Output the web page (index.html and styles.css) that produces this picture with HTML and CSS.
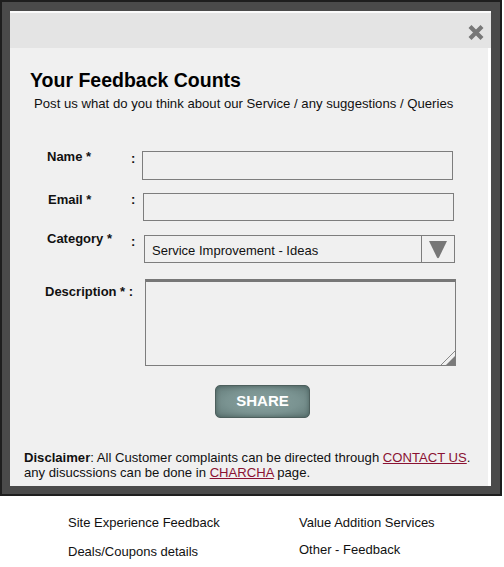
FILE: index.html
```html
<!DOCTYPE html>
<html lang="en">
<head>
<meta charset="utf-8">
<title>Your Feedback Counts</title>
<link rel="stylesheet" href="styles.css">
</head>
<body>
<div class="frame">
  <div class="card">
    <div class="card-head">
      <button class="close" type="button" aria-label="Close">
        <svg width="18" height="17" viewBox="0 0 18 17"><path d="M3 2.5 L15 14.5 M15 2.5 L3 14.5" stroke="#777" stroke-width="4.2" stroke-linecap="butt" fill="none"/></svg>
      </button>
    </div>
    <div class="card-body">
      <h1 class="title">Your Feedback Counts</h1>
      <p class="sub">Post us what do you think about our Service / any suggestions / Queries</p>
      <form class="form">
        <div class="row row-name">
          <label class="lbl">Name *</label>
          <span class="colon">:</span>
          <input class="field" type="text">
        </div>
        <div class="row row-email">
          <label class="lbl">Email *</label>
          <span class="colon">:</span>
          <input class="field" type="text">
        </div>
        <div class="row row-cat">
          <label class="lbl">Category *</label>
          <span class="colon">:</span>
          <div class="select">
            <span class="select-text">Service Improvement - Ideas</span>
            <span class="select-btn">
              <svg width="20" height="19" viewBox="0 0 20 19"><path d="M1 1 H19 L11 17.5 Q10 19 9 17.5 Z" fill="#777"/></svg>
            </span>
          </div>
        </div>
        <div class="row row-desc">
          <label class="lbl">Description * :</label>
          <div class="textarea">
            <svg class="grip" width="15" height="15" viewBox="0 0 15 15"><path d="M15 6 V15 H6 Z" fill="#7a7a7a"/><path d="M1 15 L15 1" stroke="#888" stroke-width="1"/></svg>
          </div>
        </div>
      </form>
      <div class="actions">
        <button class="share" type="button">SHARE</button>
      </div>
      <p class="disclaimer"><b>Disclaimer</b>: All Customer complaints can be directed through <a href="#">CONTACT US</a>.<br>any disucssions can be done in <a href="#">CHARCHA</a> page.</p>
    </div>
  </div>
</div>
<div class="cats">
  <ul class="cat-col">
    <li>Site Experience Feedback</li>
    <li>Deals/Coupons details</li>
  </ul>
  <ul class="cat-col cat-col-2">
    <li>Value Addition Services</li>
    <li>Other - Feedback</li>
  </ul>
</div>
</body>
</html>
```
FILE: styles.css
```css
* { box-sizing: border-box; }
html, body { margin: 0; padding: 0; background: #fff; }
body { font-family: "Liberation Sans", Arial, sans-serif; color: #111; }

.frame {
  width: 502px;
  height: 496px;
  background: #4a4a4a;
  border: 2px solid #1e1e1e;
  padding: 9px 9px 8px 8px;
}
.card {
  height: 100%;
  background: #fff;
  display: flex;
  flex-direction: column;
}
.card-head {
  height: 37px;
  background: #e4e4e4;
  border-top: 2px solid #fbfbfb;
  display: flex;
  justify-content: flex-end;
  padding: 11px 6px 0 0;
}
.close {
  border: 0;
  background: none;
  padding: 0;
  width: 18px;
  height: 17px;
  display: block;
  cursor: pointer;
}
.close svg { display: block; }

.card-body {
  flex: 1;
  background: #f0f0f0;
  margin: 0 3px 0 0;
  padding: 21px 0 0 14px;
  display: flex;
  flex-direction: column;
}
.title {
  margin: 0 0 0 6px;
  font-size: 19.5px;
  line-height: 22px;
  font-weight: bold;
  color: #000;
}
.sub {
  margin: 5px 0 0 10px;
  font-size: 13.15px;
  line-height: 15px;
  color: #111;
}

.form {
  margin: 40px 0 0 23px;
  display: flex;
  flex-direction: column;
}
.row {
  display: flex;
  align-items: flex-start;
}
.row-email { margin-top: 13px; }
.row-cat { margin-top: 14px; }
.row-desc { margin-top: 16px; }

.lbl {
  width: 84px;
  flex-shrink: 0;
  white-space: nowrap;
  font-size: 13px;
  line-height: 15px;
  font-weight: bold;
  color: #111;
}
.colon {
  width: 11px;
  flex-shrink: 0;
  font-size: 13px;
  line-height: 15px;
  font-weight: bold;
  color: #111;
}
.row-name .lbl { margin-top: -2px; }
.row-email .lbl { margin: -1px 0 0 1px; width: 83px; }
.row-email .colon { margin-top: -1px; }
.row-cat .lbl { margin-top: -4px; }
.row-cat .colon { margin-top: -1px; }
.row-desc .lbl { margin: 5px 0 0 -2px; width: 100px; }

.field {
  width: 311px;
  height: 29px;
  border: 1px solid #7d7d7d;
  background: #f0f0f0;
  margin: 0;
  padding: 0 6px;
  font: inherit;
}
.row-email .field { height: 28px; margin-left: 1px; }

.select {
  width: 311px;
  height: 28px;
  margin-left: 2px;
  border: 1px solid #7d7d7d;
  display: flex;
  align-items: stretch;
}
.select-text {
  flex: 1;
  padding: 7px 0 0 7px;
  font-size: 13px;
  line-height: 15px;
  color: #111;
}
.select-btn {
  width: 33px;
  border-left: 1px solid #7d7d7d;
  display: flex;
  justify-content: center;
  padding-top: 4px;
}
.select-btn svg { display: block; }

.textarea {
  position: relative;
  width: 311px;
  height: 87px;
  border: 1px solid #7d7d7d;
  border-top: 3px solid #777;
  background: #f0f0f0;
}
.grip {
  position: absolute;
  right: 0;
  bottom: 0;
  display: block;
}

.actions {
  display: flex;
  padding: 19px 0 0 191px;
}
.share {
  width: 95px;
  height: 33px;
  border: 1px solid #4d5f5d;
  border-radius: 5px;
  background: radial-gradient(ellipse at center, #87a09e 0%, #7a9391 55%, #627a78 100%);
  box-shadow: inset 0 0 4px rgba(40, 60, 58, 0.5);
  color: #fff;
  font-family: "Liberation Sans", Arial, sans-serif;
  font-size: 15px;
  font-weight: bold;
  padding: 0 0 2px;
  cursor: pointer;
}

.disclaimer {
  margin: auto 0 0 0;
  padding: 0 0 6px;
  font-size: 13.1px;
  line-height: 15px;
  color: #111;
}
.disclaimer b { font-weight: bold; }
.disclaimer a { color: #8a1232; text-decoration: underline; }

.cats {
  display: flex;
  padding: 19px 0 0 68px;
}
.cat-col {
  list-style: none;
  margin: 0;
  padding: 0;
  width: 231px;
  flex-shrink: 0;
  display: flex;
  flex-direction: column;
  gap: 14px;
  font-size: 13px;
  line-height: 15px;
  color: #111;
}
.cat-col-2 { width: auto; flex: 1; gap: 12px; }
```
